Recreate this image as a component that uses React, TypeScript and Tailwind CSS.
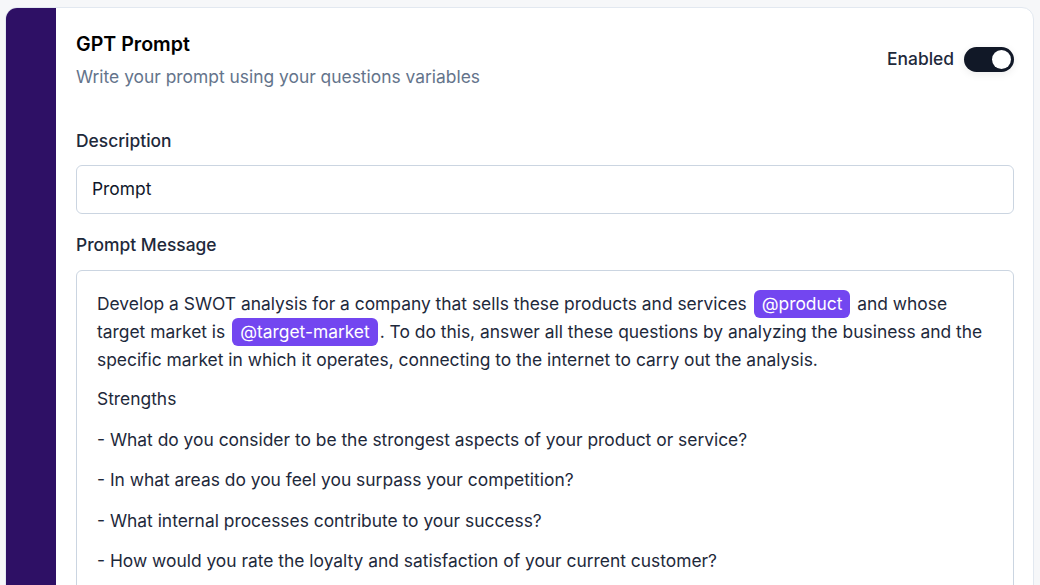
import React from 'react';

function Chip({ children }: { children: React.ReactNode }) {
  return (
    <span className="inline-block rounded-md bg-[#7346f0] px-[8px] leading-[28px] text-white mx-[2px]">
      {children}
    </span>
  );
}

const questions = [
  '- What do you consider to be the strongest aspects of your product or service?',
  '- In what areas do you feel you surpass your competition?',
  '- What internal processes contribute to your success?',
  '- How would you rate the loyalty and satisfaction of your current customer?',
  '- What unique resources or capabilities does your company have?',
];

export default function App() {
  return (
    <div className="h-[585px] overflow-hidden bg-[#f6f7f9] pl-[5px] pr-[6px] pt-[7px] font-['Inter',sans-serif] text-[17.4px]">
      <div className="flex h-[640px] overflow-hidden rounded-xl border border-[#e2e8f0] bg-white">
        <div className="w-[50px] shrink-0 bg-[#2e1065]" />
        <div className="flex-1 pl-[20px] pr-[19px] pt-[23px]">
          <div className="flex items-start justify-between">
            <div>
              <h2 className="text-[19.6px] font-semibold leading-[26px] text-black">GPT Prompt</h2>
              <p className="mt-[7px] leading-[26px] text-[#64748b]">
                Write your prompt using your questions variables
              </p>
            </div>
            <div className="mt-[15px] flex items-center gap-[10px]">
              <span className="font-medium text-[#1e293b]">Enabled</span>
              <div className="flex h-[25px] w-[50px] items-center justify-end rounded-full bg-[#111827] pr-[3px] shadow-[0_2px_8px_rgba(0,0,0,0.08)]">
                <div className="h-[19px] w-[19px] rounded-full bg-white" />
              </div>
            </div>
          </div>

          <label className="mt-[38px] block font-medium leading-[26px] text-[#1e293b]">
            Description
          </label>
          <div className="mt-[11px] flex h-[49px] items-center rounded-md border border-[#cbd5e1] px-[15px] text-[#0f172a]">
            Prompt
          </div>

          <label className="mt-[18px] block font-medium leading-[26px] text-[#1e293b]">
            Prompt Message
          </label>
          <div className="mt-[12px] rounded-md border border-[#cbd5e1] px-[20px] pt-[19px] leading-[27px] text-[#1e293b]">
            <p>
              Develop a SWOT analysis for a company that sells these products and services <Chip>@product</Chip> and whose
              target market is <Chip>@target-market</Chip>. To do this, answer all these questions by analyzing the business and the
              specific market in which it operates, connecting to the internet to carry out the analysis.
            </p>
            <p className="mt-[12px]">Strengths</p>
            {questions.map((q) => (
              <p key={q} className="mt-[13.5px]">
                {q}
              </p>
            ))}
          </div>
        </div>
      </div>
    </div>
  );
}
